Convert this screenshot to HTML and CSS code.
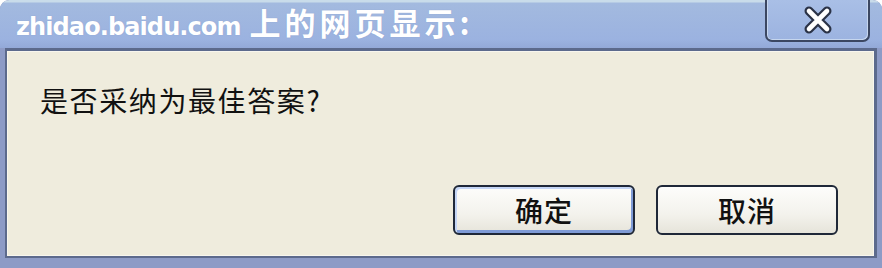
FILE: index.html
```html
<!DOCTYPE html>
<html lang="zh-CN">
<head>
<meta charset="utf-8">
<title>zhidao.baidu.com 上的网页显示</title>
<link rel="stylesheet" href="styles.css">
</head>
<body>
<div class="window">
  <div class="titlebar">
    <div class="title"><span class="title-latin">zhidao.baidu.com</span><span class="title-cjk">上的网页显示:</span></div>
    <div class="close">
      <svg class="close-icon" width="32" height="28" viewBox="0 0 32 28">
        <path d="M7 5 L25 23 M25 5 L7 23" stroke="#2a3246" stroke-width="9" stroke-linecap="round" fill="none"/>
        <path d="M7 5 L25 23 M25 5 L7 23" stroke="#ffffff" stroke-width="4.6" stroke-linecap="round" fill="none"/>
      </svg>
    </div>
  </div>
  <div class="content">
    <div class="message">是否采纳为最佳答案?</div>
    <div class="buttons">
      <div class="btn btn-default">确定</div>
      <div class="btn">取消</div>
    </div>
  </div>
</div>
</body>
</html>
```
FILE: styles.css
```css
html, body {
  margin: 0;
  padding: 0;
  background: #ffffff;
}

.window {
  width: 882px;
  height: 268px;
  box-sizing: border-box;
  display: flex;
  flex-direction: column;
  background: #8d9bc6;
  border-radius: 9px 9px 0 0;
  padding: 0 5px 10px 5px;
  overflow: hidden;
}

.titlebar {
  height: 48px;
  flex: none;
  margin: 0 -5px;
  padding: 0 12px 0 16px;
  display: flex;
  align-items: flex-start;
  background: linear-gradient(#c9dcea 0, #c9dcea 2px, #a3badf 3px, #9bb2e0 40px, #93a9d8 48px);
  border-radius: 9px 9px 0 0;
}

.title {
  margin-top: 0;
  height: 44px;
  line-height: 44px;
  color: #ffffff;
  font-weight: bold;
  white-space: nowrap;
  display: flex;
  align-items: baseline;
  text-shadow: 0 0 1px rgba(120, 140, 190, 0.6);
}

.title-latin {
  font-family: "DejaVu Sans", sans-serif;
  font-size: 24px;
  letter-spacing: -0.9px;
}

.title-cjk {
  font-family: "Noto Sans CJK SC", sans-serif;
  font-size: 31px;
  letter-spacing: 4px;
  margin-left: 9px;
}

.close {
  margin-left: auto;
  width: 105px;
  height: 42px;
  box-sizing: border-box;
  border: 2px solid #3b4762;
  border-top: none;
  border-radius: 0 0 7px 7px;
  background: linear-gradient(#a9bfe6, #9cb3e0);
  box-shadow: inset 1px 0 0 #c6d6ee, inset -1px -1px 0 #c6d6ee;
  display: flex;
  align-items: center;
  justify-content: center;
}

.close-icon {
  display: block;
  margin-top: -1px;
}

.content {
  flex: 1;
  display: flex;
  flex-direction: column;
  background: #efecdd;
  border: 2px solid #5c6a8c;
  border-top-width: 3px;
  border-right-width: 3px;
  box-shadow: inset 1px 1px 0 #f8f6ee, inset -1px -1px 0 #f8f6ee;
}

.message {
  margin: 35px 0 0 33px;
  font-family: "Noto Sans CJK SC", sans-serif;
  font-size: 28px;
  line-height: 28px;
  letter-spacing: 1.6px;
  color: #111111;
}

.buttons {
  margin-top: auto;
  display: flex;
  justify-content: flex-end;
  gap: 21px;
  padding: 0 36px 21px 0;
}

.btn {
  width: 182px;
  height: 50px;
  box-sizing: border-box;
  border: 2px solid #1f2838;
  border-radius: 6px;
  background: linear-gradient(#fdfdfb, #f3f2ec 60%, #e6e4da);
  display: flex;
  align-items: center;
  justify-content: center;
  font-family: "Noto Sans CJK SC", sans-serif;
  font-size: 28px;
  font-weight: 500;
  color: #111111;
  letter-spacing: 1px;
}

.btn-default {
  box-shadow: inset 2px 2px 0 #c4d5f5, inset -2px -3px 0 #7f9bd6;
}
```
